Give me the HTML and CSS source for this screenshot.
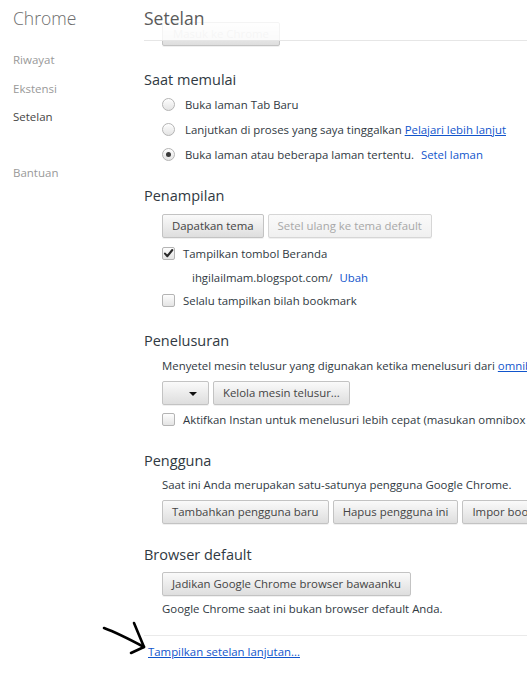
FILE: index.html
```html
<!DOCTYPE html>
<html>
<head>
<meta charset="utf-8">
<link rel="stylesheet" href="styles.css">
</head>
<body>
<div class="page">
  <nav class="side">
    <div class="side-title">Chrome</div>
    <ul class="side-list">
      <li class="side-item">Riwayat</li>
      <li class="side-item">Ekstensi</li>
      <li class="side-item selected">Setelan</li>
      <li class="side-item gap">Bantuan</li>
    </ul>
  </nav>
  <main class="main">
    <div class="content">
      <div class="top-row"><button class="btn">Masuk ke Chrome</button></div>

      <section class="sec">
        <h3 class="sec-title">Saat memulai</h3>
        <div class="row"><span class="radio"></span>Buka laman Tab Baru</div>
        <div class="row"><span class="radio"></span>Lanjutkan di proses yang saya tinggalkan <a class="link ul">Pelajari lebih lanjut</a></div>
        <div class="row"><span class="radio on"></span>Buka laman atau beberapa laman tertentu. <a class="link sp">Setel laman</a></div>
      </section>

      <section class="sec">
        <h3 class="sec-title">Penampilan</h3>
        <div class="btn-row after"><button class="btn">Dapatkan tema</button><button class="btn disabled">Setel ulang ke tema default</button></div>
        <div class="row r24"><span class="check on"><svg viewBox="0 0 13 13" width="13" height="13"><path d="M3 6.6 L5.4 9.2 L10.3 3" fill="none" stroke="#2b2b2b" stroke-width="2.1" stroke-linecap="round" stroke-linejoin="round"/></svg></span>Tampilkan tombol Beranda</div>
        <div class="row r24 indent">ihgilailmam.blogspot.com/ <a class="link sp2">Ubah</a></div>
        <div class="row r22"><span class="check"></span>Selalu tampilkan bilah bookmark</div>
      </section>

      <section class="sec">
        <h3 class="sec-title">Penelusuran</h3>
        <div class="row r24 plain">Menyetel mesin telusur yang digunakan ketika menelusuri dari <a class="link ul">omnibox</a></div>
        <div class="btn-row tight after2"><button class="btn select"><span class="caret"></span></button><button class="btn">Kelola mesin telusur...</button></div>
        <div class="row r24"><span class="check"></span>Aktifkan Instan untuk menelusuri lebih cepat (masukan omnibox dapat dicatat)</div>
      </section>

      <section class="sec">
        <h3 class="sec-title">Pengguna</h3>
        <div class="row r24 plain">Saat ini Anda merupakan satu-satunya pengguna Google Chrome.</div>
        <div class="btn-row tight2"><button class="btn">Tambahkan pengguna baru</button><button class="btn">Hapus pengguna ini</button><button class="btn">Impor bookmark dan setelan...</button></div>
      </section>

      <section class="sec sec-last">
        <h3 class="sec-title">Browser default</h3>
        <div class="btn-row"><button class="btn">Jadikan Google Chrome browser bawaanku</button></div>
        <div class="row r24 plain">Google Chrome saat ini bukan browser default Anda.</div>
      </section>

      <div class="footer"><a class="link ul">Tampilkan setelan lanjutan...</a></div>
    </div>
    <header class="head"><h1 class="head-title">Setelan</h1></header>
  </main>
</div>
<svg class="arrow" width="50" height="40" viewBox="0 0 50 40">
  <path d="M3 8 C14 12 28 19 43 27" fill="none" stroke="#000" stroke-width="2.6" stroke-linecap="round"/>
  <path d="M33 3 L43 27 L30 33" fill="none" stroke="#000" stroke-width="2.6" stroke-linecap="round" stroke-linejoin="round"/>
</svg>
</body>
</html>
```
FILE: styles.css
```css
* { box-sizing: border-box; }
html, body { margin: 0; padding: 0; background: #fff; }
body {
  font-family: "Open Sans", "Noto Sans", "Liberation Sans", sans-serif;
  font-size: 11.4px;
  color: #303942;
  width: 527px;
  height: 678px;
  overflow: hidden;
  position: relative;
}
.page { display: flex; height: 678px; }
.side { width: 144px; flex: none; padding-left: 13px; }
.side-title {
  font-size: 17.5px;
  font-weight: 300;
  color: #6d6d6d;
  height: 36px;
  line-height: 36px;
}
.side-list { list-style: none; margin: 0; padding: 10px 0 0; }
.side-item { height: 28.5px; line-height: 28px; color: #999; font-size: 11.5px; }
.side-item.selected { color: #464646; }
.side-item.gap { margin-top: 27px; }

.main { position: relative; flex: 1; overflow: hidden; white-space: nowrap; }
.head {
  position: absolute; left: 0; top: 0; right: 0; height: 41px;
  background: rgba(255,255,255,0.82);
  border-bottom: 1px solid #e6e6e6;
}
.head-title {
  margin: 0; font-size: 17.5px; font-weight: 400; color: #5a5a5a;
  line-height: 36px; height: 36px;
}
.content { padding-top: 22px; }
.top-row { padding-left: 18px; height: 24px; }

.sec { margin-top: 20.5px; }
.sec-title {
  margin: 0; font-size: 14.5px; font-weight: 400; color: #303942;
  height: 25px; line-height: 25px;
}
.row { height: 25px; display: flex; align-items: center; padding-left: 18px; }
.row.r24 { height: 24px; }
.row.r22 { height: 22px; }
.row.indent { padding-left: 48px; }
.radio {
  width: 13px; height: 13px; border-radius: 50%;
  border: 1px solid #b4b4b4;
  background: linear-gradient(#fdfdfd, #e4e4e4);
  margin-right: 10px; flex: none; position: relative;
  box-shadow: inset 0 1px 1px rgba(255,255,255,.8);
}
.radio.on::after {
  content: ""; position: absolute; left: 3px; top: 3px; width: 5px; height: 5px;
  border-radius: 50%; background: #3a3a3a;
}
.check {
  width: 13px; height: 13px; border-radius: 2px;
  border: 1px solid #b4b4b4;
  background: linear-gradient(#fdfdfd, #e4e4e4);
  margin-right: 8px; flex: none; display: flex;
}
.check svg { display: block; margin: -1px; }
.link { color: #15c; cursor: pointer; }
.link.ul { text-decoration: underline; margin-left: 3px; }
.link.sp { margin-left: 7px; }
.link.sp2 { margin-left: 7px; }

.btn-row { display: flex; gap: 4px; padding-left: 18px; margin-top: 5.5px; height: 24px; }
.btn-row.after { margin-bottom: 4px; }
.btn-row.tight { margin-top: 4px; }
.btn-row.after2 { margin-bottom: 2px; }
.btn-row.tight2 { margin-top: 3px; }
.sec + .sec { margin-top: 16.5px; }
.btn {
  font: inherit; color: #444;
  height: 24px; padding: 0 9px;
  border: 1px solid #c3c3c3; border-radius: 2px;
  background: linear-gradient(#fafafa, #e9e9e9 60%, #dedede);
  box-shadow: 0 1px 0 rgba(0,0,0,.06);
  flex: none; line-height: 20px;
}
.btn.disabled { color: #a8a8a8; border-color: #d6d6d6; background: linear-gradient(#fafafa, #f0f0f0); }
.top-row .btn { color: #c7c7c7; width: 118px; }
.btn.select { width: 47px; position: relative; }
.caret {
  position: absolute; right: 11px; top: 10px;
  border-left: 4px solid transparent; border-right: 4px solid transparent;
  border-top: 4px solid #111;
}
.sec-last { margin-top: 18px !important; }
.footer {
  margin-top: 15px; border-top: 1px solid #eaeaea;
  padding-left: 4px; height: 36px; line-height: 32px;
}
.footer .link.ul { margin-left: 0; }
.arrow { position: absolute; left: 101px; top: 620px; }
```
